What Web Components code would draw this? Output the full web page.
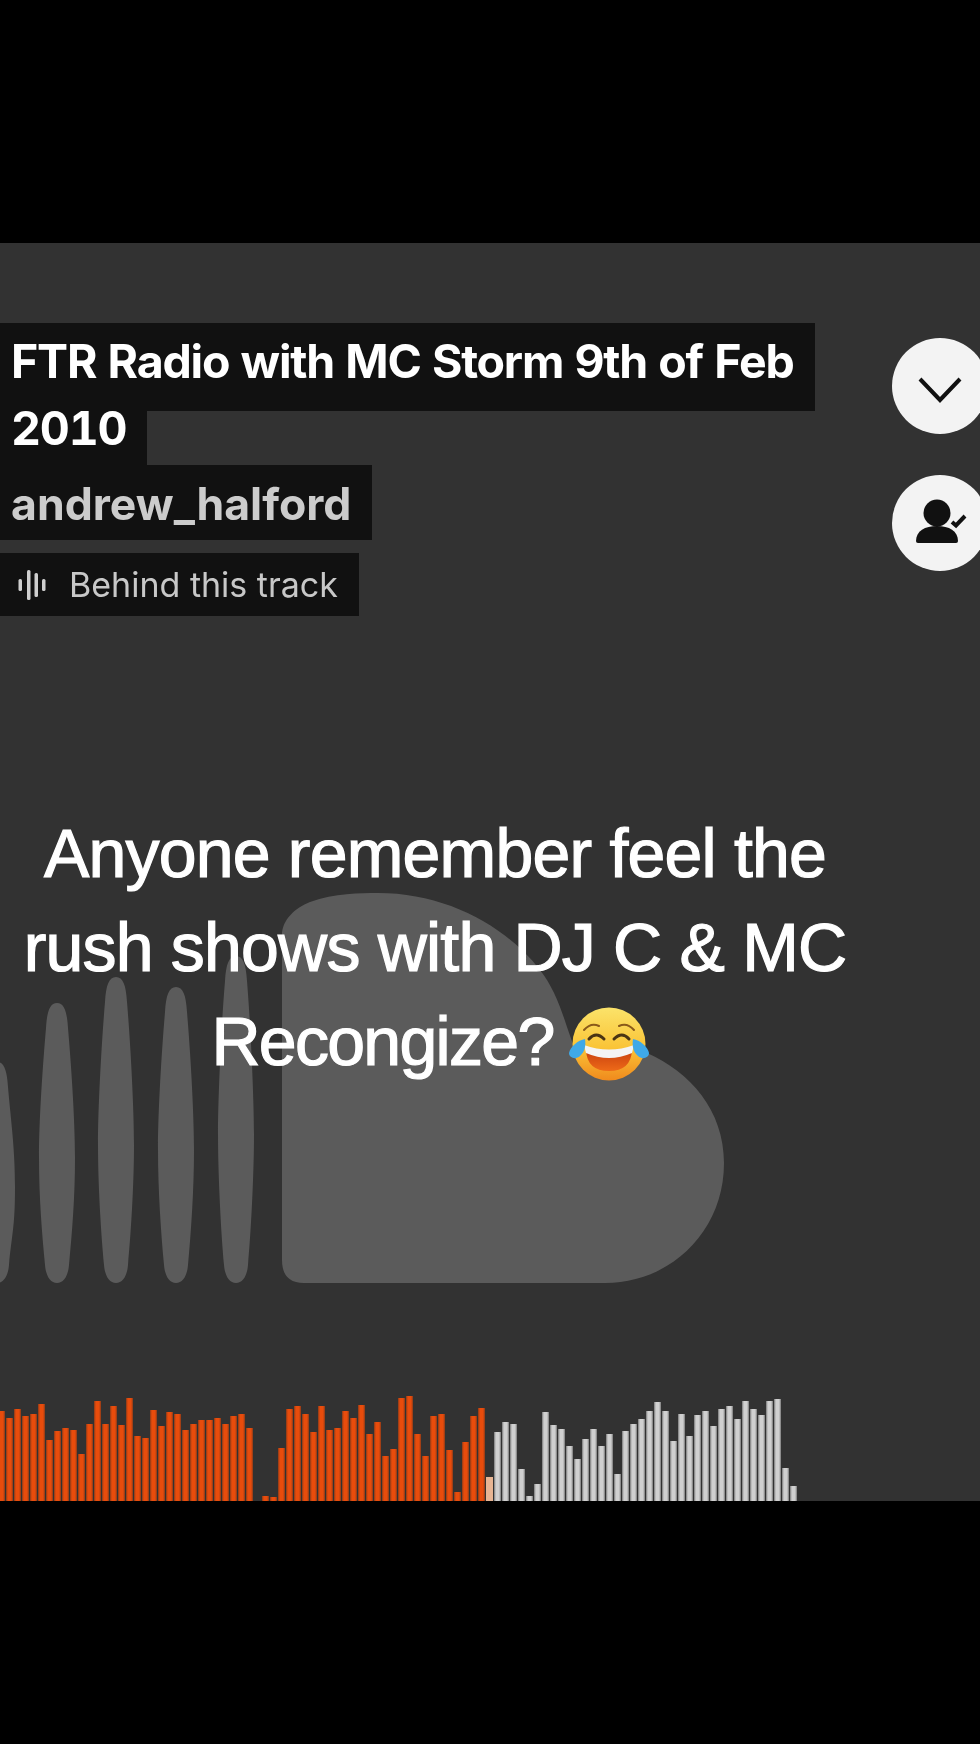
<!DOCTYPE html>
<html>
<head>
<meta charset="utf-8">
<style>
  html, body { margin: 0; background: #000; }
  body { width: 980px; height: 1744px; overflow: hidden; font-family: "Inter", "Liberation Sans", sans-serif; }
</style>
</head>
<body>
<track-stage>
  <track-info slot="info" track-title="FTR Radio with MC Storm 9th of Feb 2010" artist="andrew_halford"></track-info>
  <round-button slot="actions" icon="chevron"></round-button>
  <round-button slot="actions" icon="following"></round-button>
  <video-caption slot="caption">Anyone remember feel the<br>rush shows with DJ C &amp; MC<br><span style="letter-spacing:-1.7px">Recongize?</span></video-caption>
  <wave-form slot="wave"></wave-form>
</track-stage>

<script>
// one bar of the cloud logo, narrow at both ends and fat in the middle
function spindle(cx, t, b) {
  const m = (t + b) / 2 + 15;
  return `M${cx} ${t}
    C${cx + 7} ${t} ${cx + 10} ${t + 8} ${cx + 11} ${t + 25}
    C${cx + 14} ${t + 60} ${cx + 18} ${m - 40} ${cx + 18} ${m}
    C${cx + 18} ${m + 40} ${cx + 15} ${b - 50} ${cx + 12} ${b - 18}
    C${cx + 11} ${b - 6} ${cx + 6} ${b} ${cx} ${b}
    C${cx - 6} ${b} ${cx - 11} ${b - 6} ${cx - 12} ${b - 18}
    C${cx - 15} ${b - 50} ${cx - 18} ${m + 40} ${cx - 18} ${m}
    C${cx - 18} ${m - 40} ${cx - 14} ${t + 60} ${cx - 11} ${t + 25}
    C${cx - 10} ${t + 8} ${cx - 7} ${t} ${cx} ${t} Z`;
}

class TrackStage extends HTMLElement {
  constructor() {
    super();
    this.root = this.attachShadow({ mode: 'open' });
    this.root.innerHTML = `
    <style>
      :host { display: block; margin-top: 243px; height: 1258px; }
      .stage {
        position: relative;
        height: 100%;
        background: #323232;
        overflow: hidden;
        display: flex;
        flex-direction: column;
        filter: blur(0.5px);
      }
      .logo { position: absolute; left: 0; top: 0; width: 980px; height: 1258px; }
      .top { position: relative; display: flex; justify-content: space-between; height: 331px; padding-top: 80px; box-sizing: border-box; }
      .actions { display: flex; flex-direction: column; gap: 41px; margin-top: 15px; margin-right: -8px; }
      .caption { position: relative; margin-top: 232px; }
      .wave { position: relative; margin-top: auto; }
    </style>
    <div class="stage">
      <svg class="logo" viewBox="0 243 980 1258">
        <g fill="#5b5b5b">
          <path d="M282 935 C282 920 295 908 310 902 C335 893 360 893 378 893 C445 893 505 925 540 970 C552 985 560 1005 567 1027 L575 1050 C600 1040 625 1045 647 1053 C690 1072 724 1110 724 1163 C724 1232 670 1283 605 1283 L304 1283 Q282 1283 282 1260 Z"/>
          <path d="${spindle(-3, 1062, 1283)}"/>
          <path d="${spindle(57, 1003, 1283)}"/>
          <path d="${spindle(116, 977, 1283)}"/>
          <path d="${spindle(176, 987, 1283)}"/>
          <path d="${spindle(236, 956, 1283)}"/>
        </g>
      </svg>
      <div class="top">
        <slot name="info"></slot>
        <div class="actions"><slot name="actions"></slot></div>
      </div>
      <div class="caption"><slot name="caption"></slot></div>
      <div class="wave"><slot name="wave"></slot></div>
    </div>
    `;
  }
}

class TrackInfo extends HTMLElement {
  constructor() {
    super();
    this.root = this.attachShadow({ mode: 'open' });
    this.root.innerHTML = `
    <style>
      :host { display: block; width: 830px; font-family: "Inter", "Liberation Sans", sans-serif; }
      .title { margin-top: 5px; font-size: 46.5px; font-weight: 700; font-variant-numeric: tabular-nums; line-height: 67px; letter-spacing: -1.2px; color: #fff; height: 134px; }
      .title span {
        background: #111;
        padding: 10px 21px 22px 11px;
        box-decoration-break: clone;
        -webkit-box-decoration-break: clone;
      }
      .artist { margin-top: 3px; width: max-content; box-sizing: border-box; height: 75px; line-height: 72px; padding: 3px 21px 0 11px; background: #111; font-size: 44.6px; font-weight: 700; color: #ccc; }
      .behind { margin-top: 13px; width: 359px; box-sizing: border-box; height: 63px; display: flex; align-items: center; gap: 22px; padding-left: 18px; background: #111; font-size: 34px; color: #c8c8c8; }
      svg { width: 29px; height: 30px; flex: none; }
    </style>
    <div class="title"><span></span></div>
    <div class="artist"></div>
    <div class="behind">
      <svg viewBox="0 0 29 30" fill="#cfcfcf"><rect x="0.5" y="9" width="3.5" height="12" rx="1.5"/><rect x="9" y="0" width="3.5" height="30" rx="1.5"/><rect x="16.5" y="3" width="3.5" height="24" rx="1.5"/><rect x="24" y="9" width="3.5" height="12" rx="1.5"/></svg>
      <span>Behind this track</span>
    </div>
    `;
  }
  connectedCallback() {
    this.root.querySelector('.title span').textContent = this.getAttribute('track-title');
    this.root.querySelector('.artist').textContent = this.getAttribute('artist');
  }
}

class RoundButton extends HTMLElement {
  constructor() {
    super();
    this.root = this.attachShadow({ mode: 'open' });
    const icons = {
      chevron: '<path d="M28 41L48 62L68 41" fill="none" stroke="#111" stroke-width="4"/>',
      following: '<circle cx="45" cy="38" r="13.5" fill="#111"/><path d="M24 66C24 56 33 51 45 51C57 51 66 56 66 66Q66 68 64 68L26 68Q24 68 24 66Z" fill="#111"/><path d="M60 47L64 50.5L73 41" fill="none" stroke="#111" stroke-width="4"/>'
    };
    this.root.innerHTML = `
    <style>
      :host { display: block; width: 96px; height: 96px; border-radius: 50%; background: #f3f3f3; }
      svg { display: block; width: 96px; height: 96px; }
    </style>
    <svg viewBox="0 0 96 96">${icons[this.getAttribute('icon')] || ''}</svg>
    `;
  }
}

class VideoCaption extends HTMLElement {
  constructor() {
    super();
    this.root = this.attachShadow({ mode: 'open' });
    this.root.innerHTML = `
    <style>
      :host { display: block; width: 870px; text-align: center; color: #fff; font-family: "Liberation Sans", Arial, sans-serif; font-size: 68px; line-height: 94px; letter-spacing: -0.8px; -webkit-text-stroke: 1.2px #fff; }
      svg { width: 80px; height: 80px; vertical-align: -19px; margin-left: -3px; margin-right: 10px; }
    </style>
    <slot></slot>
    <svg viewBox="0 0 80 80" role="img" aria-label="laughing with tears">
      <defs>
        <linearGradient id="face" x1="0" y1="0" x2="0" y2="1">
          <stop offset="0" stop-color="#fbe36a"/><stop offset=".55" stop-color="#fac437"/><stop offset="1" stop-color="#f08a1d"/>
        </linearGradient>
        <linearGradient id="mouth" x1="0" y1="0" x2="0" y2="1">
          <stop offset="0" stop-color="#c8400f"/><stop offset="1" stop-color="#ee6a18"/>
        </linearGradient>
      </defs>
      <circle cx="40" cy="40" r="36.5" fill="url(#face)"/>
      <path d="M17 46Q40 56 63 46Q62 67 40 67Q18 67 17 46Z" fill="url(#mouth)"/>
      <path d="M15 41Q40 50 65 41L63 49Q40 59 17 49Z" fill="#f4f4f4"/>
      <path d="M15 26Q22 18 30 22M50 22Q58 18 65 26" fill="none" stroke="#8a5a1a" stroke-width="2" stroke-linecap="round"/>
      <path d="M20 35Q27 27 35 35M45 35Q53 27 60 35" fill="none" stroke="#4a3414" stroke-width="3" stroke-linecap="round"/>
      <path d="M16 35C9 36 1 43 0 49C0 54 7 56 11 52C16 48 17 41 16 35Z" fill="#3fa9e8"/>
      <path d="M64 35C71 36 79 43 80 49C80 54 73 56 69 52C64 48 63 41 64 35Z" fill="#3fa9e8"/>
    </svg>
    `;
  }
}

class WaveForm extends HTMLElement {
  constructor() {
    super();
    this.root = this.attachShadow({ mode: 'open' });
    const tops = [92,112,86,108,102,70,178,152,144,148,222,132,62,132,78,134,54,168,174,88,136,96,102,148,132,118,118,114,132,106,102,144,362,346,350,204,86,78,100,155,78,148,144,92,114,74,160,126,228,206,54,48,160,226,108,102,210,334,186,108,84,290,156,126,132,266,346,312,96,135,147,198,237,177,147,198,162,282,153,132,117,93,66,93,183,102,168,105,93,138,87,78,117,63,87,105,63,57,264,316];
    const bars = tops.map((t, i) => {
      const cls = i < 61 ? 'played' : (i === 61 ? 'edge' : '');
      return `<i class="${cls}" style="height:${((362 - t) / 3).toFixed(1)}px"></i>`;
    }).join('');
    this.root.innerHTML = `
    <style>
      :host { display: block; }
      .bars { display: flex; align-items: flex-end; gap: 1px; height: 120px; margin-left: -2.5px; }
      i { display: block; flex: none; width: 7px; background: linear-gradient(90deg, #777, #d0d0d0 28%, #d0d0d0 72%, #777); }
      i.played { background: linear-gradient(90deg, #8a3a18, #e84c0c 28%, #e84c0c 72%, #8a3a18); }
      i.edge { background: #e8b593; }
    </style>
    <div class="bars">${bars}</div>
    `;
  }
}

customElements.define('track-stage', TrackStage);
customElements.define('track-info', TrackInfo);
customElements.define('round-button', RoundButton);
customElements.define('video-caption', VideoCaption);
customElements.define('wave-form', WaveForm);
</script>
</body>
</html>
